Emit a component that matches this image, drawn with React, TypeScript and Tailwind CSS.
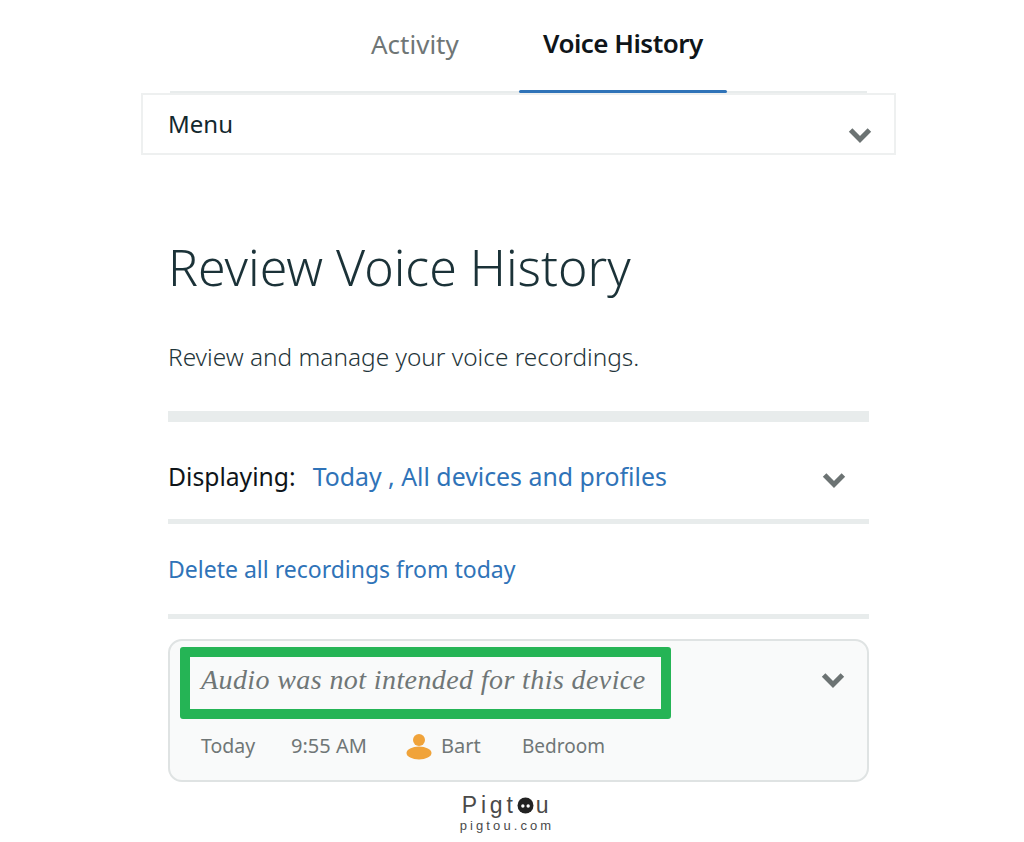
import React from "react";

const Chevron: React.FC<{ className: string }> = ({ className }) => (
  <svg className={className} viewBox="0 0 24 16" fill="none">
    <path d="M2.6 3 L12 12.4 L21.4 3" stroke="#6c7373" strokeWidth="5" />
  </svg>
);

const Divider: React.FC<{ className: string }> = ({ className }) => (
  <div className={`mx-[27px] bg-[#e8ecec] ${className}`} />
);

const App: React.FC = () => {
  return (
    <div className="relative h-[842px] w-[1024px] overflow-hidden bg-white font-['Noto_Sans',sans-serif]">
      <div className="ml-[141px] w-[755px]">
        {/* tabs */}
        <div className="mx-[29px] flex h-[93px] border-b-2 border-[#e8ecec] pl-[201px]">
          <div className="w-[148px] pt-[26px] text-[26px] leading-[36px] text-[#6f7676]">Activity</div>
          <div className="relative h-[93px] w-[208px] pl-[24px] pt-[25px] text-[26px] font-semibold leading-[36px] tracking-[-0.5px] text-[#0f1519]">
            Voice History
            <div className="absolute bottom-0 left-0 h-[3px] w-full rounded-sm bg-[#2f73b8]" />
          </div>
        </div>

        {/* menu */}
        <div className="relative h-[62px] border-2 border-[#eef0f0] pl-[25px] pt-[11px] text-[24px] leading-[36px] text-[#12282e]">
          Menu
          <Chevron className="absolute right-[22px] top-[32px] h-[16px] w-[24px]" />
        </div>

        <h1 className="ml-[27px] mt-[73px] text-[50px] font-light leading-[78px] text-[#1b3238]">Review Voice History</h1>
        <p className="ml-[27px] mt-[33px] text-[24.4px] font-light leading-[36px] text-[#1f353a]">Review and manage your voice recordings.</p>

        <Divider className="mt-[36px] h-[11px]" />
        <div className="relative mx-[28px] flex h-[97px] items-center pt-[12px]">
          <span className="ml-[-1px] text-[24.7px] text-[#0f1519]">Displaying:</span>
          <span className="ml-[17px] text-[24.85px] text-[#2f73b8]">Today , All devices and profiles</span>
          <Chevron className="absolute right-[22px] top-[50px] h-[16px] w-[24px]" />
        </div>
        <Divider className="h-[5px]" />
        <div className="mx-[27px] flex h-[90px] items-center text-[23px] text-[#2f73b8]">Delete all recordings from today</div>
        <Divider className="h-[5px]" />

        {/* recording card */}
        <div className="relative mx-[27px] mt-[20px] h-[143px] rounded-[14px] border-2 border-[#dfe3e3] bg-[#f9fafa]">
          <div className="absolute left-[10px] top-[6px] flex h-[72px] w-[491px] items-center rounded-[3px] border-[10px] border-[#25b455] pb-[6px] pl-[11px] font-['Liberation_Serif',serif] text-[28px] italic tracking-[0.4px] text-[#6f7676]">
            Audio was not intended for this device
          </div>
          <Chevron className="absolute right-[22px] top-[31px] h-[16px] w-[24px]" />
          <div className="absolute left-[31px] top-[91px] flex items-center leading-[28px] text-[#6f7676]">
            <span className="w-[90px] text-[19.5px]">Today</span>
            <span className="w-[115px] text-[20px]">9:55 AM</span>
            <svg className="h-[28px] w-[26px]" viewBox="0 0 26 28" fill="#f0a33a">
              <circle cx="13" cy="8" r="6" />
              <ellipse cx="13" cy="21" rx="12.5" ry="6.5" />
            </svg>
            <span className="ml-[9px] w-[81px] text-[20px]">Bart</span>
            <span className="text-[19px]">Bedroom</span>
          </div>
        </div>
      </div>

      {/* watermark */}
      <div className="ml-[452px] mt-[11px] flex w-[110px] flex-col items-center font-['Liberation_Sans',sans-serif] text-[#4a4a4a]">
        <div className="flex h-[24px] items-center text-[23px] leading-[24px] tracking-[3.8px]">
          <span>Pigt</span>
          <svg className="h-[17px] w-[17px]" viewBox="0 0 16 16">
            <circle cx="8" cy="8" r="7.5" fill="#222" />
            <circle cx="5.5" cy="8.5" r="1.6" fill="#fff" />
            <circle cx="10.5" cy="8.5" r="1.6" fill="#fff" />
          </svg>
          <span className="ml-[2px]">u</span>
        </div>
        <div className="mt-[1px] h-[15px] text-[13px] leading-[15px] tracking-[3.1px]">pigtou.com</div>
      </div>
    </div>
  );
};

export default App;
